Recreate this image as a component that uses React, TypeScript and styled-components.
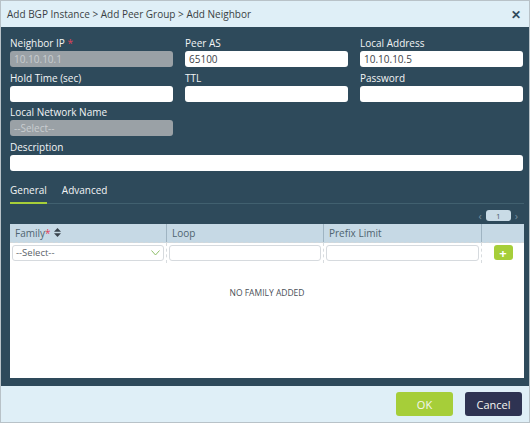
import React from 'react';
import styled, { createGlobalStyle } from 'styled-components';

const Global = createGlobalStyle`
  html, body { margin: 0; padding: 0; background: #dfeff7; }
  body { font-family: "Open Sans", "Liberation Sans", sans-serif; }
`;

const Dialog = styled.div`
  width: 530px;
  height: 423px;
  display: flex;
  flex-direction: column;
  background: #dfeff7;
  border: 1px solid #b8c2c8;
  box-sizing: border-box;
`;

const TitleBar = styled.div`
  height: 26px;
  display: flex;
  align-items: center;
  justify-content: space-between;
  padding: 0 8px 0 6px;
  font-size: 10px;
  color: #3a3f44;
`;

const Close = styled.span`
  font-size: 12px;
  font-weight: bold;
  color: #2f4a5c;
`;

const Body = styled.div`
  flex: 1;
  background: #2e4a5b;
  padding: 9px 5px 8px 9px;
  display: flex;
  flex-direction: column;
`;

const Grid = styled.div`
  display: grid;
  grid-template-columns: 163px 163px 163px;
  column-gap: 12px;
  row-gap: 3.5px;
`;

const Field = styled.div<{ $full?: boolean }>`
  display: flex;
  flex-direction: column;
  grid-column: ${p => (p.$full ? '1 / -1' : 'auto')};
`;

const Label = styled.label`
  font-size: 10px;
  color: #f2f4f5;
  line-height: 15px;
`;

const Star = styled.span`
  color: #e0405a;
`;

const Input = styled.div<{ $disabled?: boolean }>`
  height: 16px;
  border-radius: 3px;
  background: ${p => (p.$disabled ? '#9aa1a6' : '#ffffff')};
  color: ${p => (p.$disabled ? '#c9cdd0' : '#3c4248')};
  font-size: 10px;
  line-height: 16px;
  padding: 0 4px;
`;

const Tabs = styled.div`
  margin-top: 12px;
  display: flex;
  gap: 15px;
  border-bottom: 1px solid #41606f;
`;

const Tab = styled.div<{ $active?: boolean }>`
  font-size: 10px;
  color: #f2f4f5;
  padding-bottom: 5px;
  border-bottom: 2px solid ${p => (p.$active ? '#a6ce39' : 'transparent')};
  margin-bottom: -1px;
`;

const Pager = styled.div`
  margin-top: 6px;
  display: flex;
  justify-content: flex-end;
  align-items: center;
  gap: 4px;
  padding-right: 6px;
  height: 12px;
`;

const Arrow = styled.span`
  color: #7890a0;
  font-size: 11px;
  line-height: 11px;
`;

const PageNum = styled.span`
  width: 25px;
  height: 11px;
  border-radius: 3px;
  background: #c9dbe6;
  color: #4a5f6b;
  font-size: 8px;
  display: flex;
  align-items: center;
  justify-content: center;
`;

const Table = styled.div`
  margin-top: 2px;
  width: 514px;
  flex: 1;
  background: #ffffff;
  display: flex;
  flex-direction: column;
`;

const Row = styled.div<{ $head?: boolean }>`
  display: grid;
  grid-template-columns: 157px 157px 158px 1fr;
  height: ${p => (p.$head ? '18px' : '20px')};
  background: ${p => (p.$head ? '#c6d9e5' : '#ffffff')};
  border-bottom: ${p => (p.$head ? '1px dashed #d4d8da' : 'none')};
`;

const HeadCell = styled.div`
  font-size: 10px;
  color: #4f6470;
  display: flex;
  align-items: center;
  padding-left: 5px;
  border-right: 1px solid #9fb4c2;
  &:last-child { border-right: none; }
`;

const Cell = styled.div<{ $center?: boolean }>`
  display: flex;
  align-items: center;
  justify-content: ${p => (p.$center ? 'center' : 'stretch')};
  padding: 0 2px;
  border-right: 1px dashed #d8dcdf;
  &:last-child { border-right: none; }
`;

const CellInput = styled.div`
  flex: 1;
  height: 14px;
  border: 1px solid #d6dade;
  border-radius: 3px;
  font-size: 9.5px;
  color: #5a6168;
  display: flex;
  align-items: center;
  justify-content: space-between;
  padding: 0 3px;
`;

const AddButton = styled.div`
  width: 19px;
  height: 15px;
  border-radius: 3px;
  background: #a6ce39;
  color: #ffffff;
  font-size: 13px;
  font-weight: bold;
  display: flex;
  align-items: center;
  justify-content: center;
`;

const Empty = styled.div`
  text-align: center;
  font-size: 8.5px;
  color: #4a4f58;
  margin-top: 24px;
`;

const Footer = styled.div`
  height: 36px;
  display: flex;
  justify-content: flex-end;
  align-items: center;
  gap: 12px;
  padding-right: 7px;
`;

const Button = styled.div<{ $primary?: boolean }>`
  width: 57px;
  height: 24px;
  border-radius: 3px;
  background: ${p => (p.$primary ? '#a6ce39' : '#2e3352')};
  color: #f4f6f0;
  font-size: 11px;
  display: flex;
  align-items: center;
  justify-content: center;
`;

function SortIcon() {
  return (
    <svg width="7" height="9" viewBox="0 0 7 9" style={{ marginLeft: 3 }}>
      <path d="M3.5 0 L7 3.8 H0 Z" fill="#3a444d" />
      <path d="M3.5 9 L7 5.2 H0 Z" fill="#3a444d" />
    </svg>
  );
}

function Chevron() {
  return (
    <svg width="9" height="6" viewBox="0 0 9 6">
      <path d="M0.5 0.5 L4.5 5 L8.5 0.5" stroke="#8fbf6a" fill="none" strokeWidth="1" />
    </svg>
  );
}

export default function App() {
  return (
    <>
      <Global />
      <Dialog>
        <TitleBar>
          <span>Add BGP Instance &gt; Add Peer Group &gt; Add Neighbor</span>
          <Close>✕</Close>
        </TitleBar>
        <Body>
          <Grid>
            <Field>
              <Label>Neighbor IP <Star>*</Star></Label>
              <Input $disabled>10.10.10.1</Input>
            </Field>
            <Field>
              <Label>Peer AS</Label>
              <Input>65100</Input>
            </Field>
            <Field>
              <Label>Local Address</Label>
              <Input>10.10.10.5</Input>
            </Field>
            <Field>
              <Label>Hold Time (sec)</Label>
              <Input />
            </Field>
            <Field>
              <Label>TTL</Label>
              <Input />
            </Field>
            <Field>
              <Label>Password</Label>
              <Input />
            </Field>
            <Field>
              <Label>Local Network Name</Label>
              <Input $disabled>--Select--</Input>
            </Field>
            <div />
            <div />
            <Field $full>
              <Label>Description</Label>
              <Input />
            </Field>
          </Grid>
          <Tabs>
            <Tab $active>General</Tab>
            <Tab>Advanced</Tab>
          </Tabs>
          <Pager>
            <Arrow>‹</Arrow>
            <PageNum>1</PageNum>
            <Arrow>›</Arrow>
          </Pager>
          <Table>
            <Row $head>
              <HeadCell>Family<Star>*</Star><SortIcon /></HeadCell>
              <HeadCell>Loop</HeadCell>
              <HeadCell>Prefix Limit</HeadCell>
              <HeadCell />
            </Row>
            <Row>
              <Cell><CellInput>--Select--<Chevron /></CellInput></Cell>
              <Cell><CellInput /></Cell>
              <Cell><CellInput /></Cell>
              <Cell $center><AddButton>+</AddButton></Cell>
            </Row>
            <Empty>NO FAMILY ADDED</Empty>
          </Table>
        </Body>
        <Footer>
          <Button $primary>OK</Button>
          <Button>Cancel</Button>
        </Footer>
      </Dialog>
    </>
  );
}
